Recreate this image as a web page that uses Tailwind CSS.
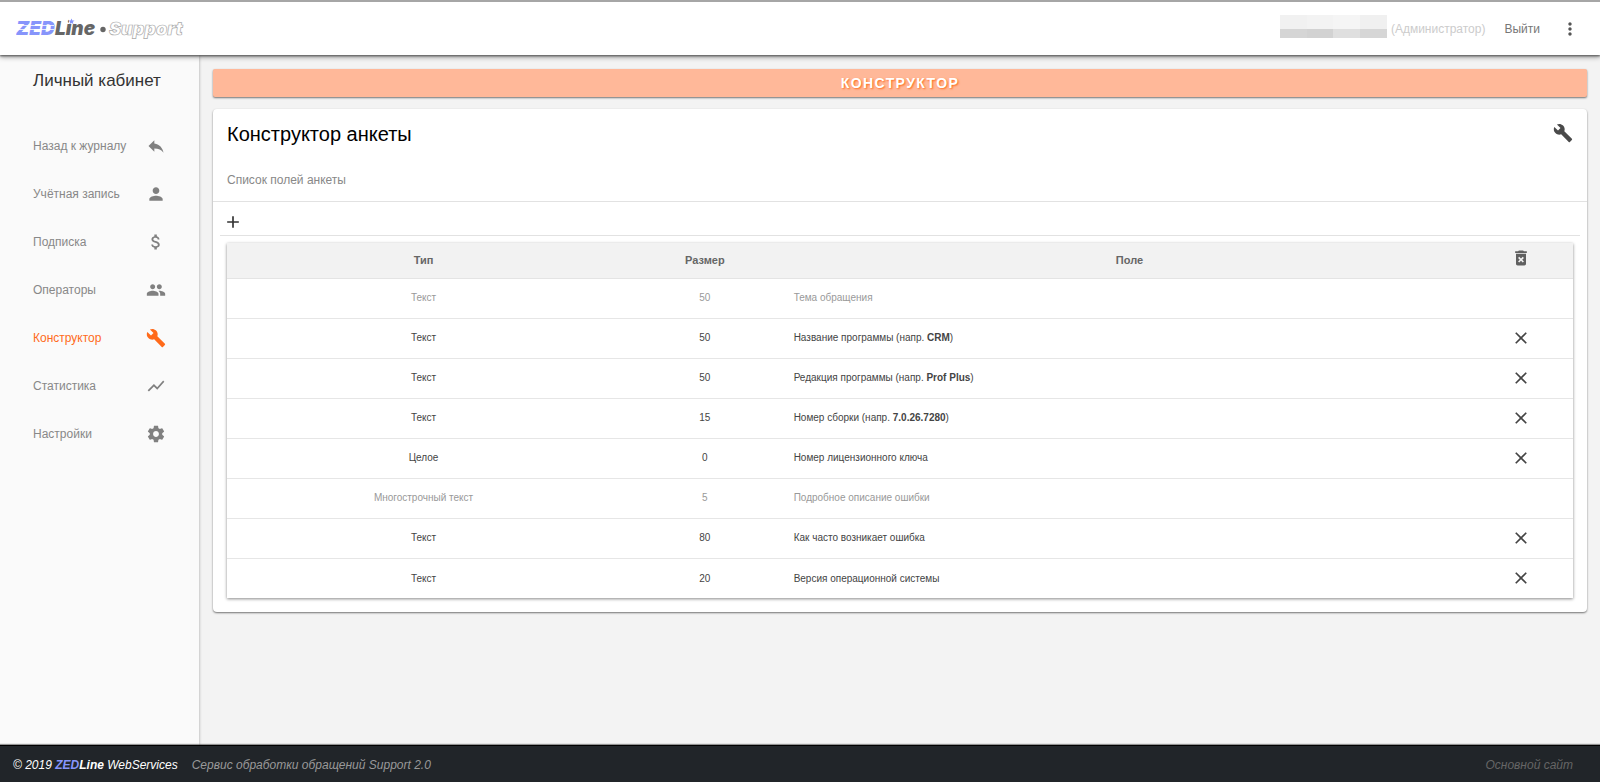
<!DOCTYPE html>
<html lang="ru">
<head>
<meta charset="utf-8">
<title>ZEDLine Support</title>
<script src="https://cdn.jsdelivr.net/npm/@tailwindcss/browser@4"></script>
</head>
<body class="flex min-h-screen flex-col bg-[#f3f3f3] font-['Liberation_Sans',sans-serif] text-xs text-[#888]">
<svg class="hidden">
  <symbol id="build" viewBox="0 0 24 24"><path d="M22.7 19l-9.1-9.1c.9-2.3.4-5-1.5-6.9-2-2-5-2.4-7.4-1.3L9 6 6 9 1.6 4.7C.4 7.1.9 10.1 2.9 12.1c1.9 1.9 4.6 2.4 6.9 1.5l9.1 9.1c.4.4 1 .4 1.4 0l2.3-2.3c.5-.4.5-1.1.1-1.4z"/></symbol>
  <symbol id="close" viewBox="0 0 24 24"><path d="M19 6.41L17.59 5 12 10.59 6.41 5 5 6.41 10.59 12 5 17.59 6.41 19 12 13.41 17.59 19 19 17.59 13.41 12z"/></symbol>
</svg>

<header class="relative z-10 flex h-[55px] items-center justify-between border-t-2 border-[#a6a6a6] bg-white pr-5 pl-4 shadow-[0_1px_2px_#555,0_2px_5px_#0006]">
  <a href="#" aria-label="ZEDLine Support">
    <svg class="h-7 w-44" viewBox="0 0 176 28" font-family="Inter, sans-serif" font-style="italic" font-weight="900">
      <text x="0" y="20" font-size="19" fill="#8795fb">ZED</text>
      <path d="M0 10.500H38M0 14.500H38" stroke="#fff" stroke-width="0.8"/>
      <text x="39" y="20" font-size="19" fill="#666">Line</text>
      <path d="M53 4h7v5h-7z" fill="#fff"/>
      <path d="M55.500 3.500l.9 1.900 2.100.2-1.600 1.400.5 2.100-1.900-1.100-1.900 1.100.5-2.100-1.600-1.400 2.100-.2z" fill="#8795fb"/>
      <circle cx="87" cy="14.500" r="2.700" fill="#666"/>
      <text x="93" y="20" font-size="18" fill="#fff" stroke="#aaa" stroke-width="0.7">Support</text>
    </svg>
  </a>
  <div class="flex items-center">
    <div class="mr-1 mb-1 grid h-[23px] w-[107px] grid-cols-4 grid-rows-[14px_9px]" aria-hidden="true">
      <i class="bg-[#f1f1f1]"></i><i class="bg-[#f3f3f3]"></i><i class="bg-[#f5f5f5]"></i><i class="bg-[#f0f0f0]"></i>
      <i class="bg-[#d5d5d5]"></i><i class="bg-[#d2d2d2]"></i><i class="bg-[#dfdfdf]"></i><i class="bg-[#d6d6d6]"></i>
    </div>
    <span class="text-[#ccc]">(Администратор)</span>
    <a href="#" class="ml-[19px] text-[#777]">Выйти</a>
    <button class="ml-5 text-[#555]" aria-label="Меню"><svg class="size-5 fill-current" viewBox="0 0 24 24"><path d="M12 8c1.100 0 2-.9 2-2s-.9-2-2-2-2 .9-2 2 .9 2 2 2zm0 2c-1.100 0-2 .9-2 2s.9 2 2 2 2-.9 2-2-.9-2-2-2zm0 6c-1.100 0-2 .9-2 2s.9 2 2 2 2-.9 2-2-.9-2-2-2z"/></svg></button>
  </div>
</header>

<div class="flex grow">
  <aside class="w-[199px] shrink-0 bg-[#fafafa] px-[33px] pt-4 shadow-[0_0_3px_#0005]">
    <h2 class="text-[17px] leading-5 whitespace-nowrap text-[#333]">Личный кабинет</h2>
    <nav class="mt-[31px] text-[#888]">
      <a href="#" class="flex h-12 items-center justify-between">Назад к журналу<svg class="size-5 fill-[#808080]" viewBox="0 0 24 24"><path d="M10 9V5l-7 7 7 7v-4.100c5 0 8.500 1.600 11 5.100-1-5-4-10-11-11z"/></svg></a>
      <a href="#" class="flex h-12 items-center justify-between">Учётная запись<svg class="size-5 fill-[#808080]" viewBox="0 0 24 24"><path d="M12 12c2.210 0 4-1.790 4-4s-1.790-4-4-4-4 1.790-4 4 1.790 4 4 4zm0 2c-2.670 0-8 1.340-8 4v2h16v-2c0-2.660-5.330-4-8-4z"/></svg></a>
      <a href="#" class="flex h-12 items-center justify-between">Подписка<svg class="size-5 fill-[#808080]" viewBox="0 0 24 24"><path d="M11.800 10.900c-2.270-.59-3-1.200-3-2.150 0-1.090 1.010-1.850 2.700-1.850 1.780 0 2.440.85 2.500 2.100h2.210c-.07-1.720-1.120-3.300-3.210-3.810V3h-3v2.160c-1.940.42-3.500 1.680-3.500 3.610 0 2.310 1.910 3.460 4.700 4.130 2.500.6 3 1.480 3 2.410 0 .69-.49 1.790-2.700 1.790-2.060 0-2.870-.92-2.980-2.100h-2.200c.12 2.190 1.760 3.420 3.680 3.830V21h3v-2.150c1.950-.37 3.500-1.500 3.500-3.550 0-2.840-2.430-3.810-4.700-4.400z"/></svg></a>
      <a href="#" class="flex h-12 items-center justify-between">Операторы<svg class="size-5 fill-[#808080]" viewBox="0 0 24 24"><path d="M16 11c1.660 0 2.990-1.340 2.990-3S17.660 5 16 5c-1.660 0-3 1.340-3 3s1.340 3 3 3zm-8 0c1.660 0 2.990-1.340 2.990-3S9.660 5 8 5C6.340 5 5 6.340 5 8s1.340 3 3 3zm0 2c-2.330 0-7 1.170-7 3.500V19h14v-2.500c0-2.330-4.670-3.500-7-3.500zm8 0c-.29 0-.62.02-.97.05 1.160.84 1.970 1.970 1.970 3.450V19h6v-2.500c0-2.330-4.670-3.500-7-3.500z"/></svg></a>
      <a href="#" class="flex h-12 items-center justify-between text-[#ff6a1a]">Конструктор<svg class="size-5 fill-[#ff6a1a]"><use href="#build"/></svg></a>
      <a href="#" class="flex h-12 items-center justify-between">Статистика<svg class="size-5 fill-[#808080]" viewBox="0 0 24 24"><path d="M3.500 18.490l6-6.010 4 4L22 6.920l-1.410-1.410-7.090 7.970-4-4L2 16.990z"/></svg></a>
      <a href="#" class="flex h-12 items-center justify-between">Настройки<svg class="size-5 fill-[#808080]" viewBox="0 0 24 24"><path d="M19.430 12.980c.04-.32.07-.64.07-.98s-.03-.66-.07-.98l2.110-1.650c.19-.15.24-.42.12-.64l-2-3.460c-.12-.22-.39-.3-.61-.22l-2.490 1c-.52-.4-1.080-.73-1.690-.98l-.38-2.650C14.460 2.180 14.250 2 14 2h-4c-.25 0-.46.18-.49.42l-.38 2.650c-.61.25-1.170.59-1.690.98l-2.490-1c-.23-.09-.49 0-.61.22l-2 3.460c-.13.22-.07.49.12.64l2.110 1.650c-.04.32-.07.65-.07.98s.03.66.07.98l-2.110 1.650c-.19.15-.24.42-.12.64l2 3.460c.12.22.39.3.61.22l2.490-1c.52.4 1.080.73 1.690.98l.38 2.650c.03.24.24.42.49.42h4c.25 0 .46-.18.49-.42l.38-2.650c.61-.25 1.170-.59 1.690-.98l2.490 1c.23.09.49 0 .61-.22l2-3.460c.12-.22.07-.49-.12-.64l-2.110-1.650zM12 15.500c-1.930 0-3.500-1.570-3.500-3.500s1.570-3.500 3.500-3.500 3.500 1.570 3.500 3.500-1.570 3.500-3.500 3.500z"/></svg></a>
    </nav>
  </aside>

  <main class="grow py-[14px] pr-[13px] pl-[14px]">
    <h1 class="rounded-xs bg-[#ffb899] text-center text-sm leading-7 font-bold tracking-widest text-white shadow-[0_1px_2px_#0008] [text-shadow:1px_1px_2px_#ff6a1a]">КОНСТРУКТОР</h1>
    <section class="mt-3 rounded-sm bg-white pb-[14px] shadow-[0_1px_2px_#0008]">
      <div class="flex items-start justify-between px-[14px] pt-3">
        <h2 class="text-xl leading-[26px] text-black">Конструктор анкеты</h2>
        <svg class="mt-[2px] size-5 fill-[#4a4a4a]"><use href="#build"/></svg>
      </div>
      <p class="mt-[23px] border-b border-[#e2e2e2] px-[14px] pb-[11px] leading-5">Список полей анкеты</p>
      <div class="mx-[7px] flex h-[34px] items-end border-b border-[#e2e2e2] px-1 pb-[3px]">
        <button class="-ml-px" aria-label="Добавить поле"><svg class="size-5 fill-[#333]" viewBox="0 0 24 24"><path d="M19 13h-6v6h-2v-6H5v-2h6V5h2v6h6v2z"/></svg></button>
      </div>
      <div class="mx-[14px] mt-[7px] shadow-[0_1px_3px_#0007]">
        <table class="w-full table-fixed text-center text-[10px] text-[#444]">
          <colgroup><col class="w-[29.2%]"><col class="w-[12.6%]"><col class="w-[50.5%]"><col class="w-[7.7%]"></colgroup>
          <thead class="bg-[#f2f2f2] text-[11px] text-[#666]">
            <tr class="h-[35px] border-b border-[#e4e4e4]"><th>Тип</th><th>Размер</th><th>Поле</th><th><svg class="mx-auto mb-1 size-5 fill-[#606060]" viewBox="0 0 24 24" role="img" aria-label="Удалить"><path d="M6 19c0 1.100.9 2 2 2h8c1.100 0 2-.9 2-2V7H6v12zm2.460-7.120l1.410-1.410L12 12.590l2.120-2.120 1.410 1.410L13.410 14l2.120 2.120-1.410 1.410L12 15.410l-2.120 2.120-1.410-1.410L10.590 14l-2.130-2.120zM15.500 4l-1-1h-5l-1 1H5v2h14V4z"/></svg></th></tr>
          </thead>
          <tbody class="divide-y divide-[#e6e6e6]">
            <tr class="h-10 text-[#999]"><td>Текст</td><td>50</td><td class="px-1 text-left">Тема обращения</td><td></td></tr>
            <tr class="h-10"><td>Текст</td><td>50</td><td class="px-1 text-left">Название программы (напр. <b>CRM</b>)</td><td><button class="mx-auto mb-px block" aria-label="Удалить"><svg class="size-5 fill-[#444]"><use href="#close"/></svg></button></td></tr>
            <tr class="h-10"><td>Текст</td><td>50</td><td class="px-1 text-left">Редакция программы (напр. <b>Prof Plus</b>)</td><td><button class="mx-auto mb-px block" aria-label="Удалить"><svg class="size-5 fill-[#444]"><use href="#close"/></svg></button></td></tr>
            <tr class="h-10"><td>Текст</td><td>15</td><td class="px-1 text-left">Номер сборки (напр. <b>7.0.26.7280</b>)</td><td><button class="mx-auto mb-px block" aria-label="Удалить"><svg class="size-5 fill-[#444]"><use href="#close"/></svg></button></td></tr>
            <tr class="h-10"><td>Целое</td><td>0</td><td class="px-1 text-left">Номер лицензионного ключа</td><td><button class="mx-auto mb-px block" aria-label="Удалить"><svg class="size-5 fill-[#444]"><use href="#close"/></svg></button></td></tr>
            <tr class="h-10 text-[#999]"><td>Многострочный текст</td><td>5</td><td class="px-1 text-left">Подробное описание ошибки</td><td></td></tr>
            <tr class="h-10"><td>Текст</td><td>80</td><td class="px-1 text-left">Как часто возникает ошибка</td><td><button class="mx-auto mb-px block" aria-label="Удалить"><svg class="size-5 fill-[#444]"><use href="#close"/></svg></button></td></tr>
            <tr class="h-10"><td>Текст</td><td>20</td><td class="px-1 text-left">Версия операционной системы</td><td><button class="mx-auto mb-px block" aria-label="Удалить"><svg class="size-5 fill-[#444]"><use href="#close"/></svg></button></td></tr>
          </tbody>
        </table>
      </div>
    </section>
  </main>
</div>

<footer class="relative flex h-[37px] items-center border-t border-black bg-[#212529] pt-px pr-[27px] pl-[13px] italic shadow-[0_-1px_1px_#0006]">
  <span class="text-white">© 2019 <b><span class="text-[#8795fb]">ZED</span>Line</b> WebServices</span>
  <span class="ml-[14px] text-[#999]">Сервис обработки обращений Support 2.0</span>
  <a href="#" class="ml-auto text-[#666]">Основной сайт</a>
</footer>
</body>
</html>
